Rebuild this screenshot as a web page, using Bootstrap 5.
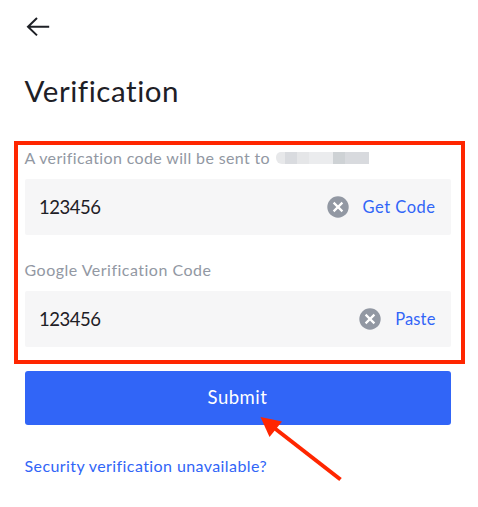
<!DOCTYPE html>
<html lang="en">
<head>
<meta charset="utf-8">
<meta name="viewport" content="width=device-width, initial-scale=1">
<title>Verification</title>
<link href="https://cdn.jsdelivr.net/npm/bootstrap@5.3.0/dist/css/bootstrap.min.css" rel="stylesheet">
<style>
body{font-family:Lato,"Open Sans",sans-serif;color:#1e2026;background:#fff;overflow:hidden}
.screen{width:478px;height:507px}
.topbar{height:53px;padding:16px 0 0 24.5px}
.heading{height:88px;padding:20px 0 0 24.5px;font-size:29.5px;line-height:36px;font-weight:400;letter-spacing:.55px}
.frame{width:451px;height:223px;margin-left:14px;border:4px solid #ff2600;padding:0 10.5px 0 6.5px}
.caption{height:34px;padding-top:3px;font-size:16px;line-height:20px;color:#9298a3;letter-spacing:.36px}
.caption-next{height:56px;padding-top:24.5px;letter-spacing:.49px}
.field{height:56px;background:#f6f6f7;border-radius:2px;padding:0 15px 0 14.5px}
.field input{font-size:18.5px;letter-spacing:-.5px;color:#1e2026;min-width:0;line-height:24px}
.field .btn{font-size:16.5px;line-height:24px;color:#3165f7;letter-spacing:.5px;margin-left:14px}
.field .btn-paste{letter-spacing:.15px}
.mosaic{width:93px;height:12px;margin-left:6.5px;border-radius:5px 0 0 6px;background:linear-gradient(90deg,#e7e8ea 0 9px,#d9dbdf 9px 21px,#e5e6e8 21px 33px,#ebecee 33px 57px,#ced2d5 57px 69px,#d8dade 69px 93px)}
.submit{width:426px;height:54px;margin:7px 0 0 24.5px;background:#3165f7;border-radius:3px;font-size:18.5px;letter-spacing:.5px}
.help{margin:30px 0 0 24.5px;font-size:16px;line-height:22px;color:#3165f7;letter-spacing:.41px}
.pointer{left:255px;top:410px}
</style>
</head>
<body>
<main class="screen position-relative d-flex flex-column align-items-start">
<div class="topbar">
<svg class="d-block" width="26" height="22" viewBox="0 0 26 22" fill="none" stroke="#1e2026" stroke-width="2"><path d="M24.200 10.700H3M12 2 3 10.700l9 8.700"/></svg>
</div>
<h1 class="heading m-0">Verification</h1>
<section class="frame">
<div class="caption d-flex align-items-start"><span>A verification code will be sent to</span><span class="mosaic mt-1"></span></div>
<div class="field d-flex align-items-center">
<input class="form-control-plaintext p-0 flex-grow-1" value="123456" aria-label="Verification code">
<svg class="flex-shrink-0" width="22" height="22" viewBox="0 0 22 22"><circle cx="11" cy="11" r="10.7" fill="#9298a3"/><path d="m6.600 6.600 8.800 8.800m0-8.800-8.800 8.800" stroke="#fff" stroke-width="2.200"/></svg>
<button class="btn border-0 p-0 text-nowrap" type="button">Get Code</button>
</div>
<div class="caption caption-next">Google Verification Code</div>
<div class="field d-flex align-items-center">
<input class="form-control-plaintext p-0 flex-grow-1" value="123456" aria-label="Google verification code">
<svg class="flex-shrink-0" width="22" height="22" viewBox="0 0 22 22"><circle cx="11" cy="11" r="10.7" fill="#9298a3"/><path d="m6.600 6.600 8.800 8.800m0-8.800-8.800 8.800" stroke="#fff" stroke-width="2.200"/></svg>
<button class="btn btn-paste border-0 p-0 text-nowrap" type="button">Paste</button>
</div>
</section>
<button class="submit btn border-0 p-0 text-white" type="button">Submit</button>
<a class="help text-decoration-none" href="#">Security verification unavailable?</a>
<svg class="pointer position-absolute" width="92" height="76" viewBox="0 0 92 76"><path d="M85.500 69.500 18 17" stroke="#ff2600" stroke-width="4"/><path d="m5.500 7 21.500 4.500-12.500 15.500z" fill="#ff2600"/></svg>
</main>
<script src="https://cdn.jsdelivr.net/npm/bootstrap@5.3.0/dist/js/bootstrap.bundle.min.js"></script>
</body>
</html>
